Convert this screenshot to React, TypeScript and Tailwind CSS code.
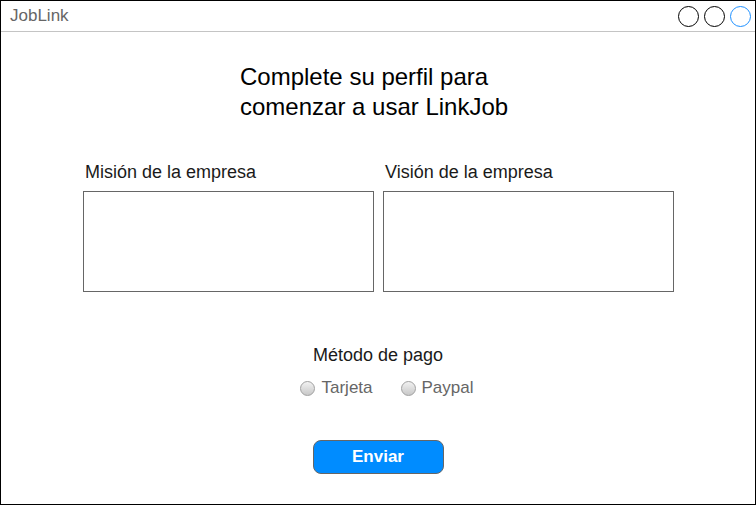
const Radio = ({ label }: { label: string }) => {
  return (
    <label className="flex items-center gap-[6px] text-[17px] leading-[20px] text-[#666666]">
      <span className="w-[15px] h-[15px] rounded-full border border-[#a0a0a0] bg-gradient-to-b from-[#f2f2f2] to-[#c8c8c8]" />
      <span>{label}</span>
    </label>
  );
};

const App = () => {
  return (
    <div
      className="w-[756px] h-[505px] border border-black bg-white flex flex-col"
      style={{ fontFamily: '"Liberation Sans", Arial, sans-serif' }}
    >
      <header className="h-[31px] border-b border-[#c4c4c4] flex items-center justify-between pl-[9px] pr-[4px] shrink-0">
        <span className="text-[17px] text-[#666666]">JobLink</span>
        <div className="flex items-center gap-[5px]">
          <span className="w-[21px] h-[21px] rounded-full border border-black" />
          <span className="w-[21px] h-[21px] rounded-full border border-black" />
          <span className="w-[21px] h-[21px] rounded-full border border-[#1e90ff]" />
        </div>
      </header>

      <main className="flex flex-col">
        <h1 className="mt-[30px] pl-[239px] text-[24px] leading-[30px] text-black">
          Complete su perfil para
          <br />
          comenzar a usar LinkJob
        </h1>

        <div className="mt-[40px] pl-[82px] flex gap-[9px]">
          <div className="flex flex-col">
            <span className="pl-[2px] text-[18px] leading-[20px] text-[#1a1a1a]">Misión de la empresa</span>
            <div className="mt-[9px] w-[291px] h-[101px] border border-[#666666]" />
          </div>
          <div className="flex flex-col">
            <span className="pl-[2px] text-[18px] leading-[20px] text-[#1a1a1a]">Visión de la empresa</span>
            <div className="mt-[9px] w-[291px] h-[101px] border border-[#666666]" />
          </div>
        </div>

        <div className="mt-[53px] flex flex-col items-center">
          <span className="text-[18px] leading-[20px] text-[#1a1a1a]">Método de pago</span>
          <div className="mt-[13px] pl-[18px] flex items-center gap-[28px]">
            <Radio label="Tarjeta" />
            <Radio label="Paypal" />
          </div>
          <button className="mt-[42px] w-[131px] h-[34px] rounded-[8px] border border-[#666666] bg-[#008cff] text-white text-[17px] font-bold">
            Enviar
          </button>
        </div>
      </main>
    </div>
  );
};

export default App;
